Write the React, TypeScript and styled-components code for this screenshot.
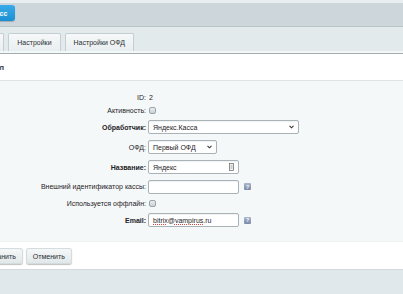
import styled, { createGlobalStyle } from 'styled-components'

const Global = createGlobalStyle`
  html, body {
    margin: 0;
    padding: 0;
    background: #fff;
    overflow: hidden;
  }
  body {
    font-family: "Liberation Sans", Arial, sans-serif;
    font-size: 7px;
    color: #222;
  }
`

const Page = styled.div`
  width: 403px;
  height: 294px;
  display: flex;
  flex-direction: column;
  overflow: hidden;
`

const TopStrip = styled.div`
  height: 3px;
  background: #e9eef0;
`

const Toolbar = styled.div`
  height: 24px;
  background: #cdd6db;
  border-bottom: 1px solid #b9c3c8;
  display: flex;
  align-items: flex-start;
  padding-top: 2px;
  box-sizing: border-box;
`

const BlueButton = styled.button`
  margin-left: -43px;
  height: 16px;
  padding: 0 8px;
  border: 0;
  border-radius: 3px;
  background: linear-gradient(#3aabea, #1b8fd2);
  box-shadow: 0 1px 1px rgba(0, 0, 0, 0.2);
  color: #fff;
  font: bold 7px "Liberation Sans", Arial, sans-serif;
`

const TabBar = styled.div`
  height: 27px;
  background: #e3eaec;
  border-bottom: 1px solid #a3aeb3;
  box-shadow: inset 0 -2px 0 #f4f7f8;
  display: flex;
  align-items: flex-end;
  gap: 4px;
  padding-bottom: 2px;
  box-sizing: border-box;
`

const Tab = styled.div<{ $cut?: number }>`
  height: 17px;
  padding: 0 8px;
  margin-left: ${p => (p.$cut ? `-${p.$cut}px` : '0')};
  display: flex;
  align-items: center;
  background: linear-gradient(#f6f8f9, #e9eef0);
  border: 1px solid #c5ced2;
  border-bottom: 0;
  border-radius: 2px 2px 0 0;
  color: #2a2f33;
  font-size: 7px;
  white-space: nowrap;
`

const TitleArea = styled.div`
  height: 26px;
  display: flex;
  align-items: center;
  border-bottom: 1px solid #dde3e6;
`

const Title = styled.div`
  font-size: 8px;
  font-weight: bold;
  color: #3a3f43;
  margin-left: -1px;
`

const Form = styled.div`
  background: #f5f8f9;
  padding: 10px 0 11px;
  display: grid;
  grid-template-columns: 146px 1fr;
  column-gap: 2px;
  border-bottom: 1px solid #edf1f2;
`

const Label = styled.div<{ $h: number; $bold?: boolean }>`
  height: ${p => p.$h}px;
  display: flex;
  align-items: center;
  justify-content: flex-end;
  font-weight: ${p => (p.$bold ? 'bold' : 'normal')};
  color: #1f2326;
  white-space: nowrap;
`

const Cell = styled.div<{ $h: number }>`
  height: ${p => p.$h}px;
  display: flex;
  align-items: center;
  gap: 5px;
`

const Value = styled.span`
  color: #1f2326;
  padding-left: 1px;
`

const Check = styled.span`
  width: 7px;
  height: 7px;
  margin-left: 1px;
  border: 1px solid #9aa5ab;
  border-radius: 2px;
  background: linear-gradient(#e9edef, #c9d1d5);
  box-sizing: border-box;
`

const Box = styled.div<{ $w: number }>`
  width: ${p => p.$w}px;
  height: 14px;
  box-sizing: border-box;
  border: 1px solid #a8b3b8;
  border-radius: 2px;
  background: #fff;
  box-shadow: inset 0 1px 1px rgba(0, 0, 0, 0.06);
  display: flex;
  align-items: center;
  justify-content: space-between;
  padding: 0 4px 0 4px;
  color: #1f2326;
  font-size: 7px;
  white-space: nowrap;
`

const Help = styled.span`
  width: 7px;
  height: 7px;
  border-radius: 1px;
  background: linear-gradient(#aab6cd, #7b8aa8);
  color: #fff;
  font-size: 5px;
  font-weight: bold;
  display: flex;
  align-items: center;
  justify-content: center;
`

const Spell = styled.span`
  text-decoration: underline dotted #e0473f;
  text-decoration-thickness: 1px;
  text-underline-offset: 1px;
`

const Footer = styled.div`
  height: 27px;
  display: flex;
  align-items: center;
  gap: 3px;
  padding-top: 1px;
  box-sizing: border-box;
`

const Button = styled.button<{ $cut?: number }>`
  height: 16px;
  margin-left: ${p => (p.$cut ? `-${p.$cut}px` : '0')};
  padding: 0 7px;
  border: 0;
  border-radius: 3px;
  background: linear-gradient(#f7f9f9, #e0e6e8);
  box-shadow: 0 1px 1px rgba(0, 0, 0, 0.25), inset 0 0 0 1px #d5dcdf;
  color: #2a2f33;
  font: 7px "Liberation Sans", Arial, sans-serif;
`

const Bottom = styled.div`
  flex: 1;
  background: #e1e8eb;
  border-top: 1px solid #d2dadd;
`

const Chevron = () => (
  <svg width="5" height="4" viewBox="0 0 5 4">
    <path d="M0.5 0.8 L2.5 2.8 L4.5 0.8" fill="none" stroke="#333" strokeWidth="1.1" />
  </svg>
)

const KeyIcon = () => (
  <svg width="5" height="8" viewBox="0 0 5 8">
    <rect x="0.5" y="0.5" width="4" height="7" fill="#f3f3f3" stroke="#777" strokeWidth="0.8" />
    <line x1="1.5" y1="3" x2="3.5" y2="3" stroke="#777" strokeWidth="0.6" />
    <line x1="1.5" y1="5" x2="3.5" y2="5" stroke="#777" strokeWidth="0.6" />
  </svg>
)

export default function App() {
  return (
    <>
      <Global />
      <Page>
        <TopStrip />
        <Toolbar>
          <BlueButton>Список касс</BlueButton>
        </Toolbar>
        <TabBar>
          <Tab $cut={85}>Основные параметры</Tab>
          <Tab>Настройки</Tab>
          <Tab>Настройки ОФД</Tab>
        </TabBar>
        <TitleArea>
          <Title>л</Title>
        </TitleArea>
        <Form>
          <Label $h={12}>ID:</Label>
          <Cell $h={12}><Value>2</Value></Cell>

          <Label $h={14}>Активность:</Label>
          <Cell $h={14}><Check /></Cell>

          <Label $h={20} $bold>Обработчик:</Label>
          <Cell $h={20}>
            <Box $w={151}>Яндекс.Касса<Chevron /></Box>
          </Cell>

          <Label $h={20}>ОФД:</Label>
          <Cell $h={20}>
            <Box $w={69}>Первый ОФД<Chevron /></Box>
          </Cell>

          <Label $h={20} $bold>Название:</Label>
          <Cell $h={20}>
            <Box $w={91}>Яндекс<KeyIcon /></Box>
          </Cell>

          <Label $h={19}>Внешний идентификатор кассы:</Label>
          <Cell $h={19}>
            <Box $w={91} />
            <Help>?</Help>
          </Cell>

          <Label $h={14}>Используется оффлайн:</Label>
          <Cell $h={14}><Check /></Cell>

          <Label $h={20} $bold>Email:</Label>
          <Cell $h={20}>
            <Box $w={91}><span><Spell>bitrix</Spell>@<Spell>vampirus</Spell>.ru</span></Box>
            <Help>?</Help>
          </Cell>
        </Form>
        <Footer>
          <Button $cut={26}>Сохранить</Button>
          <Button>Отменить</Button>
        </Footer>
        <Bottom />
      </Page>
    </>
  )
}
